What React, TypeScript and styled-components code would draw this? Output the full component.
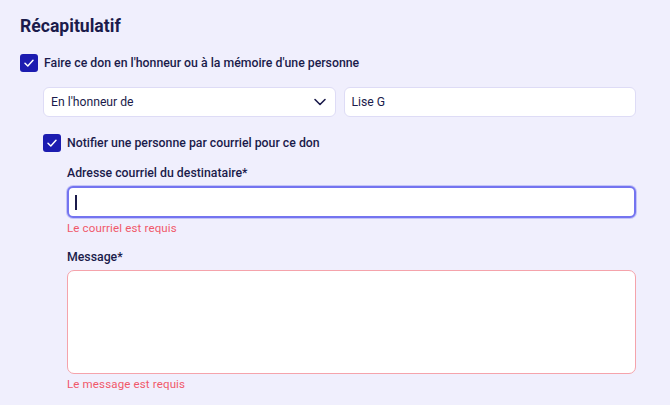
import React from "react";
import styled, { createGlobalStyle } from "styled-components";

const Global = createGlobalStyle`
  html, body { margin: 0; padding: 0; background: #f0effd; }
  body { font-family: Roboto, "Noto Sans", sans-serif; color: #1b1b4b; }
  * { box-sizing: border-box; }
`;

const Page = styled.div`
  width: 670px;
  height: 405px;
  overflow: hidden;
  padding: 15px 34px 0 20px;
  display: flex;
  flex-direction: column;
`;

const Title = styled.h2`
  margin: 0;
  font-size: 17.6px;
  font-weight: 700;
  line-height: 22px;
  color: #1b1b4b;
`;

const CheckRow = styled.label<{ $indent?: boolean }>`
  display: flex;
  align-items: center;
  gap: 6px;
  margin-top: 17px;
  margin-left: ${(p) => (p.$indent ? "23px" : "0")};
  font-size: 12.3px;
  font-weight: 500;
  line-height: 18px;
  color: #1b1b4b;
`;

const Box = styled.span`
  width: 18px;
  height: 18px;
  border-radius: 3px;
  background: #1c1cb0;
  display: inline-flex;
  align-items: center;
  justify-content: center;
  flex: none;
`;

const Indented = styled.div`
  margin-left: 23px;
  display: grid;
  grid-template-columns: 1fr 1fr;
  gap: 8px;
  margin-top: 15px;
`;

const Field = styled.div`
  height: 30px;
  background: #fff;
  border: 1px solid #dedcf6;
  border-radius: 6px;
  display: flex;
  align-items: center;
  justify-content: space-between;
  padding: 0 8px 0 7px;
  font-size: 12.2px;
  color: #1b1b4b;
`;

const Section = styled.div`
  margin-left: 47px;
  display: flex;
  flex-direction: column;
`;

const Label = styled.div<{ $top: number }>`
  margin-top: ${(p) => p.$top}px;
  font-size: 12.3px;
  font-weight: 500;
  line-height: 18px;
  color: #1b1b4b;
`;

const EmailInput = styled.div`
  margin-top: 4px;
  height: 32px;
  background: #fff;
  border: 2px solid #7474f0;
  box-shadow: 0 0 0 1px #c4c4f8;
  border-radius: 6px;
  display: flex;
  align-items: center;
  padding-left: 6px;
`;

const Caret = styled.span`
  width: 1.5px;
  height: 15px;
  background: #1b1b4b;
`;

const TextArea = styled.div`
  margin-top: 4px;
  height: 104px;
  background: #fff;
  border: 1px solid #f5a3ab;
  border-radius: 7px;
`;

const ErrorText = styled.div`
  margin-top: 2px;
  font-size: 11.5px;
  line-height: 16px;
  letter-spacing: 0.15px;
  color: #f0586a;
`;

const BottomCard = styled.div`
  margin: 13px -9px 0 4px;
  height: 4px;
  border-top: 1px solid #dcd9f4;
  border-radius: 6px 6px 0 0;
`;

const Check = () => (
  <svg width="12" height="12" viewBox="0 0 12 12" fill="none">
    <path d="M2 6.3 L4.8 9 L10 3.2" stroke="#fff" strokeWidth="1.5" strokeLinecap="round" strokeLinejoin="round" />
  </svg>
);

const Chevron = () => (
  <svg width="14" height="14" viewBox="0 0 14 14" fill="none">
    <path d="M2 4.5 L7 9.5 L12 4.5" stroke="#1b1b4b" strokeWidth="1.6" strokeLinecap="round" strokeLinejoin="round" />
  </svg>
);

export default function App() {
  return (
    <Page>
      <Global />
      <Title>Récapitulatif</Title>
      <CheckRow>
        <Box><Check /></Box>
        Faire ce don en l'honneur ou à la mémoire d'une personne
      </CheckRow>
      <Indented>
        <Field>
          <span>En l'honneur de</span>
          <Chevron />
        </Field>
        <Field>Lise G</Field>
      </Indented>
      <CheckRow $indent>
        <Box><Check /></Box>
        Notifier une personne par courriel pour ce don
      </CheckRow>
      <Section>
        <Label $top={12}>Adresse courriel du destinataire*</Label>
        <EmailInput><Caret /></EmailInput>
        <ErrorText>Le courriel est requis</ErrorText>
        <Label $top={12}>Message*</Label>
        <TextArea />
        <ErrorText>Le message est requis</ErrorText>
      </Section>
      <BottomCard />
    </Page>
  );
}
